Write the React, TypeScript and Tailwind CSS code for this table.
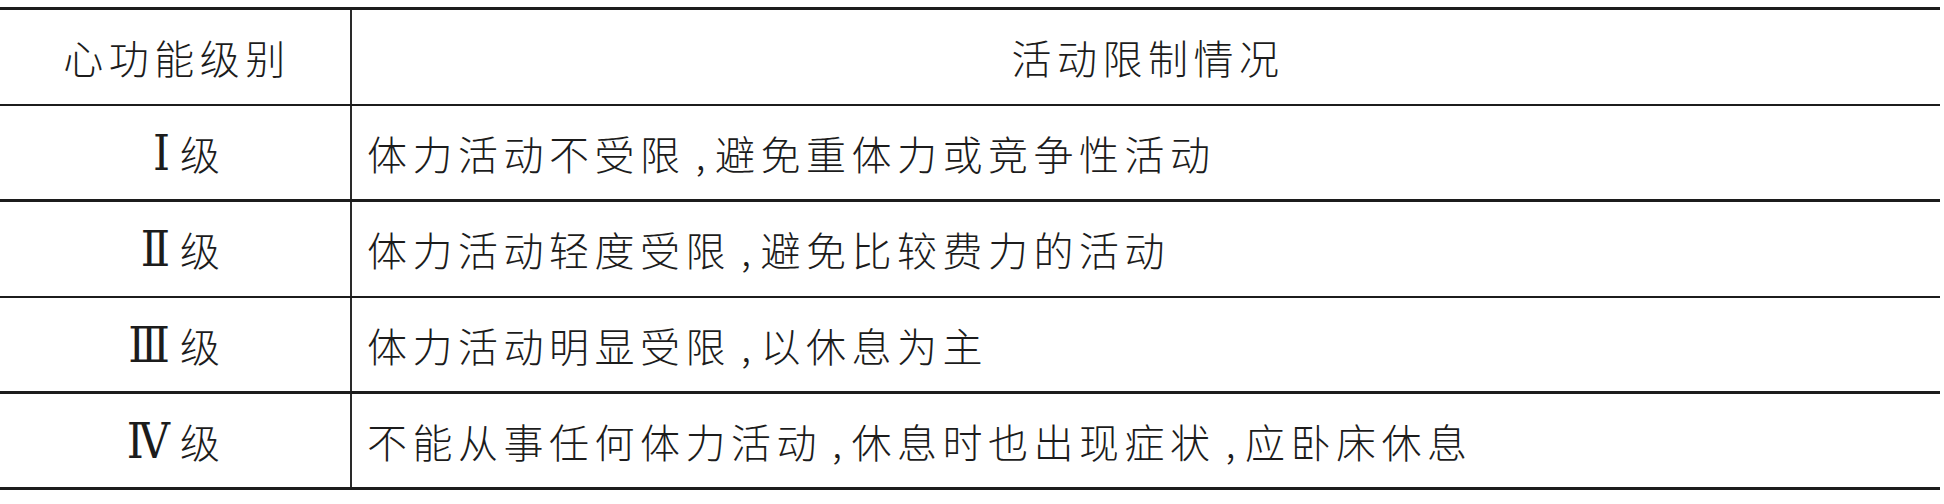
import React from "react";

type Part = string;

const rows: { level: string; parts: Part[]; border: string }[] = [
  { level: "Ⅰ", parts: ["体力活动不受限", "避免重体力或竞争性活动"], border: "border-b-[3px]" },
  { level: "Ⅱ", parts: ["体力活动轻度受限", "避免比较费力的活动"], border: "border-b-[2px]" },
  { level: "Ⅲ", parts: ["体力活动明显受限", "以休息为主"], border: "border-b-[3px]" },
  { level: "Ⅳ", parts: ["不能从事任何体力活动", "休息时也出现症状", "应卧床休息"], border: "border-b-[3px]" },
];

const cjk = "font-['Noto_Sans_CJK_SC',sans-serif]";

export default function App() {
  return (
    <div className="w-[1944px] h-[504px] bg-white pt-[7px]">
      <div className={`w-[1940px] border-t-[3px] border-[#1c1c1c] text-[#1c1c1c] text-[40px] leading-none tracking-[5.5px] font-light ${cjk}`}>
        <div className="flex h-[96px] border-b-[2px] border-[#1c1c1c]">
          <div className="w-[352px] shrink-0 border-r-[2px] border-[#2a2a2a] flex items-center justify-center pl-[4px]">
            心功能级别
          </div>
          <div className="flex-1 flex items-center justify-center pl-[4px]">活动限制情况</div>
        </div>
        {rows.map((r) => (
          <div key={r.level} className={`flex h-[96px] ${r.border} border-[#1c1c1c]`}>
            <div className="w-[352px] shrink-0 border-r-[2px] border-[#2a2a2a] flex items-center pl-[108px]">
              <div className="flex items-baseline">
                <span className="w-[62px] text-right text-[48px] tracking-normal font-normal [font-stretch:condensed] font-['DejaVu_Serif','Liberation_Serif','Noto_Sans_CJK_SC',serif]">
                  {r.level}
                </span>
                <span className="ml-[10px]">级</span>
              </div>
            </div>
            <div className="flex-1 flex items-center pl-[15px]">
              {r.parts.map((p, i) => (
                <React.Fragment key={i}>
                  {i > 0 && <span className="ml-[10px] mr-[4px]">,</span>}
                  <span>{p}</span>
                </React.Fragment>
              ))}
            </div>
          </div>
        ))}
      </div>
    </div>
  );
}
